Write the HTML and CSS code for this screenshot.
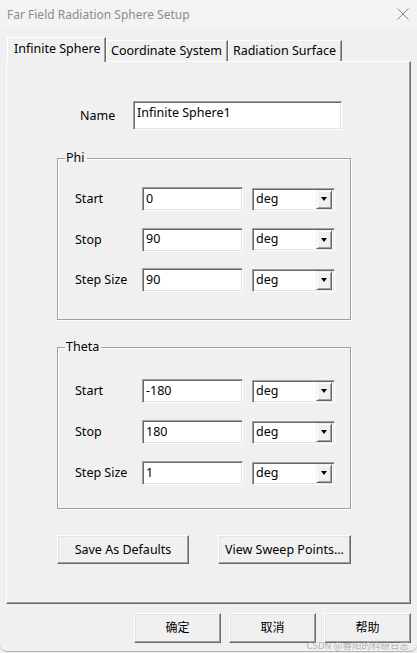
FILE: index.html
```html
<!DOCTYPE html>
<html>
<head>
<meta charset="utf-8">
<link rel="stylesheet" href="styles.css">
</head>
<body>
<div class="window">
  <div class="titlebar">
    <span class="title">Far Field Radiation Sphere Setup</span>
    <svg class="close" width="12" height="12" viewBox="0 0 12 12"><path d="M0.5 0.5 L11.5 11.5 M11.5 0.5 L0.5 11.5" stroke="#8a8a8a" stroke-width="1" fill="none"/></svg>
  </div>
  <div class="tabs">
    <div class="tab active">Infinite Sphere</div>
    <div class="tab">Coordinate System</div>
    <div class="tab">Radiation Surface</div>
  </div>
  <div class="panel">
    <div class="name-row">
      <span class="name-label">Name</span>
      <input class="field name-field" type="text" value="Infinite Sphere1">
    </div>
    <fieldset class="group phi">
      <legend>Phi</legend>
      <div class="rows">
        <span class="lbl">Start</span><input class="field" type="text" value="0"><div class="combo"><span>deg</span><span class="drop"><i></i></span></div>
        <span class="lbl">Stop</span><input class="field" type="text" value="90"><div class="combo"><span>deg</span><span class="drop"><i></i></span></div>
        <span class="lbl">Step Size</span><input class="field" type="text" value="90"><div class="combo"><span>deg</span><span class="drop"><i></i></span></div>
      </div>
    </fieldset>
    <fieldset class="group theta">
      <legend>Theta</legend>
      <div class="rows">
        <span class="lbl">Start</span><input class="field" type="text" value="-180"><div class="combo"><span>deg</span><span class="drop"><i></i></span></div>
        <span class="lbl">Stop</span><input class="field" type="text" value="180"><div class="combo"><span>deg</span><span class="drop"><i></i></span></div>
        <span class="lbl">Step Size</span><input class="field" type="text" value="1"><div class="combo"><span>deg</span><span class="drop"><i></i></span></div>
      </div>
    </fieldset>
    <div class="panel-buttons">
      <button class="btn save">Save As Defaults</button>
      <button class="btn view">View Sweep Points...</button>
    </div>
  </div>
  <div class="footer">
    <button class="btn foot"><span class="cap">确定</span></button>
    <button class="btn foot"><span class="cap">取消</span></button>
    <button class="btn foot"><span class="cap">帮助</span></button>
    <span class="watermark">CSDN @春阳的科研日志</span>
  </div>
</div>
</body>
</html>
```
FILE: styles.css
```css
* { box-sizing: border-box; }
html, body { margin: 0; padding: 0; }
body {
  width: 417px;
  height: 653px;
  background: #f0f0f0;
  font-family: "Noto Sans", "Noto Sans CJK SC", sans-serif;
  font-size: 12px;
  color: #000;
  overflow: hidden;
}
.window {
  width: 417px;
  height: 652px;
  background: #f0f0f0;
  border-bottom: 1px solid #b4b4b4;
  border-radius: 0 0 7px 7px;
  display: flex;
  flex-direction: column;
}
.titlebar {
  height: 30px;
  display: flex;
  align-items: center;
  justify-content: space-between;
  padding: 0 8px 2px 7px;
  background: #f3f3f3;
}
.title {
  color: #8c8c8c;
  font-size: 12px;
}
.tabs {
  display: flex;
  align-items: flex-end;
  margin: 7px 0 0 7px;
  height: 24px;
  position: relative;
  z-index: 1;
}
.tab {
  height: 21px;
  padding: 0 5px 0 4px;
  line-height: 20px;
  font-size: 12.5px;
  background: #f0f0f0;
  border-top: 1px solid #fff;
  border-left: 1px solid #fff;
  border-right: 1px solid #696969;
  box-shadow: inset -1px 0 0 #a0a0a0;
  white-space: nowrap;
}
.tab.active {
  height: 25px;
  margin-bottom: -1px;
  padding: 0 6px;
  line-height: 21px;
  width: 99px;
}
.panel {
  margin: 0 6px;
  height: 543px;
  border-top: 1px solid #fff;
  border-left: 1px solid #fff;
  border-right: 1px solid #696969;
  border-bottom: 1px solid #696969;
  box-shadow: inset -1px -1px 0 #a0a0a0;
}
.name-row {
  display: flex;
  align-items: center;
  margin-top: 39px;
  height: 29px;
}
.name-label {
  margin-left: 73px;
  width: 53px;
  font-size: 12.5px;
}
.field {
  display: block;
  margin: 0;
  background: #fff;
  border: 1px solid;
  border-color: #a0a0a0 #fff #fff #a0a0a0;
  box-shadow: inset 1px 1px 0 #696969, inset -1px -1px 0 #e3e3e3;
  font-family: inherit;
  font-size: 12.5px;
  color: #000;
  padding: 0 3px 2px 3px;
  height: 24px;
  width: 101px;
  outline: none;
}
.name-field {
  width: 209px;
  height: 29px;
  padding-bottom: 7px;
}
.group {
  margin: 0 0 0 50px;
  width: 294px;
  border: 1px solid #a0a0a0;
  box-shadow: 1px 1px 0 #fff, inset 1px 1px 0 #fff;
  padding: 0;
  min-width: 0;
}
.group legend {
  margin-left: 7px;
  padding: 0 2px 0 1px;
  line-height: 16px;
  font-size: 12.5px;
}
.phi { margin-top: 20px; padding: 21px 0 27px 0; }
.theta { margin-top: 19px; padding: 24px 0 23px 0; }
.phi .rows { row-gap: 16.5px; }
.theta .rows { row-gap: 17px; }
.rows {
  display: grid;
  grid-template-columns: 58px 101px 83px;
  grid-auto-rows: 24px;
  column-gap: 9px;
  align-items: center;
  margin-left: 17px;
}
.lbl { font-size: 12.5px; padding-bottom: 1px; white-space: nowrap; }
.combo {
  height: 23px;
  width: 83px;
  background: #fff;
  border: 1px solid;
  border-color: #a0a0a0 #fff #fff #a0a0a0;
  box-shadow: inset 1px 1px 0 #696969, inset -1px -1px 0 #e3e3e3;
  display: flex;
  align-items: center;
  justify-content: space-between;
  padding: 1px 2px 1px 3px;
  font-size: 12.5px;
}
.combo span:first-child { padding-bottom: 2px; }
.drop {
  width: 16px;
  height: 19px;
  background: #f0f0f0;
  border: 1px solid;
  border-color: #f0f0f0 #696969 #696969 #f0f0f0;
  box-shadow: inset 1px 1px 0 #fff, inset -1px -1px 0 #a0a0a0;
  display: flex;
  align-items: center;
  justify-content: center;
}
.drop i {
  display: block;
  width: 0;
  height: 0;
  border-left: 3.5px solid transparent;
  border-right: 3.5px solid transparent;
  border-top: 4px solid #000;
}
.panel-buttons {
  display: flex;
  gap: 29px;
  margin: 26px 0 0 50px;
}
.btn {
  margin: 0;
  height: 29px;
  background: #f0f0f0;
  border: 1px solid;
  border-color: #fff #696969 #696969 #fff;
  box-shadow: inset -1px -1px 0 #a0a0a0, inset 1px 1px 0 #e3e3e3;
  font-family: inherit;
  font-size: 12.5px;
  color: #000;
  padding: 0 0 1px 0;
}
.save { width: 132px; }
.view { width: 133px; }
.footer {
  position: relative;
  display: flex;
  justify-content: flex-end;
  gap: 8px;
  padding: 9px 6px 0 0;
}
.foot {
  width: 87px;
  height: 30px;
  font-family: "Noto Sans CJK SC", sans-serif;
  font-size: 12px;
  line-height: 12px;
  padding: 0 0 2px 0;
}
.cap { display: inline-block; line-height: 12px; }
.watermark {
  position: absolute;
  right: 8px;
  top: 36px;
  font-family: "Noto Sans CJK SC", sans-serif;
  font-size: 9.5px;
  line-height: 10px;
  color: rgba(160, 160, 160, 0.8);
  pointer-events: none;
  white-space: nowrap;
}
```
